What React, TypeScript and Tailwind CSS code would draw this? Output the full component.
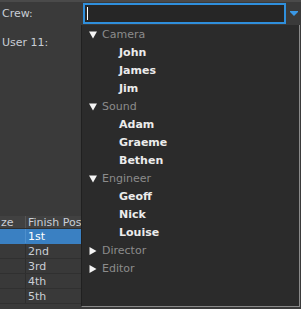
import React from "react";

type Group = { name: string; open: boolean; members: string[] };

const groups: Group[] = [
  { name: "Camera", open: true, members: ["John", "James", "Jim"] },
  { name: "Sound", open: true, members: ["Adam", "Graeme", "Bethen"] },
  { name: "Engineer", open: true, members: ["Geoff", "Nick", "Louise"] },
  { name: "Director", open: false, members: [] },
  { name: "Editor", open: false, members: [] },
];

const places = ["1st", "2nd", "3rd", "4th", "5th"];

function Caret({ open }: { open: boolean }) {
  return (
    <svg width="8" height="8" viewBox="0 0 8 8" className="shrink-0">
      {open ? (
        <path d="M0 0.5h8L4 7.5z" fill="#f4f4f4" />
      ) : (
        <path d="M0.5 0v8l7-4z" fill="#f4f4f4" />
      )}
    </svg>
  );
}

export default function App() {
  return (
    <div
      className="relative w-[301px] h-[309px] overflow-hidden bg-[#3a3a3a] flex flex-col text-[11px] text-[#c9ced6]"
      style={{ fontFamily: '"DejaVu Sans", "Liberation Sans", sans-serif' }}
    >
      <div className="h-[2px] bg-[#4a4a4a]" />
      <div className="flex items-center h-[23px]">
        <div className="w-[83px] pl-[2px] pt-[1px]">Crew:</div>
        <div className="w-[203px] h-[21px] border-2 border-[#2f8fdc] bg-[#262626] flex items-center px-[2px]">
          <div className="w-px h-[13px] bg-white" />
        </div>
        <div className="flex-1 flex justify-center pl-[1px]">
          <svg width="8" height="5" viewBox="0 0 8 5">
            <path d="M0 0h8v1L4 5 0 1z" fill="#3a98e6" />
          </svg>
        </div>
      </div>
      <div className="pl-[2px] mt-[10px]">User 11:</div>
      <div className="flex-1" />

      <div className="w-[110px] mb-[5px]">
        <div className="flex h-[13px] bg-[#414141] border-b border-[#2e2e2e] leading-[13px]">
          <div className="w-[26px] border-r border-[#555] pl-[1px] overflow-hidden">ze</div>
          <div className="flex-1 pl-[2px] whitespace-nowrap">Finish Pos</div>
        </div>
        {places.map((p, i) => (
          <div
            key={p}
            className={`flex h-[15px] leading-[15px] border-b ${
              i === 0 ? "bg-[#3a80c2] border-[#3a80c2] text-white" : "bg-[#393939] border-[#303030]"
            }`}
          >
            <div className={`w-[26px] border-r ${i === 0 ? "border-[#4d8fcc]" : "border-[#2e2e2e]"}`} />
            <div className="flex-1 pl-[2px]">{p}</div>
          </div>
        ))}
      </div>

      <div className="absolute left-[81px] top-[25px] w-[219px] h-[282px] bg-[#2b2b2b] border-l border-[#202020] border-r border-r-[#8a8a8a] border-b border-b-[#8a8a8a] pt-[1px]">
        {groups.map((g) => (
          <div key={g.name}>
            <div className="flex items-center h-[18px] pl-[7px] gap-[5px]">
              <Caret open={g.open} />
              <span className="text-[#8c8c8c]">{g.name}</span>
            </div>
            {g.members.map((m) => (
              <div key={m} className="h-[18px] leading-[18px] pl-[37px] font-bold text-[#ececec]">
                {m}
              </div>
            ))}
          </div>
        ))}
      </div>
    </div>
  );
}
